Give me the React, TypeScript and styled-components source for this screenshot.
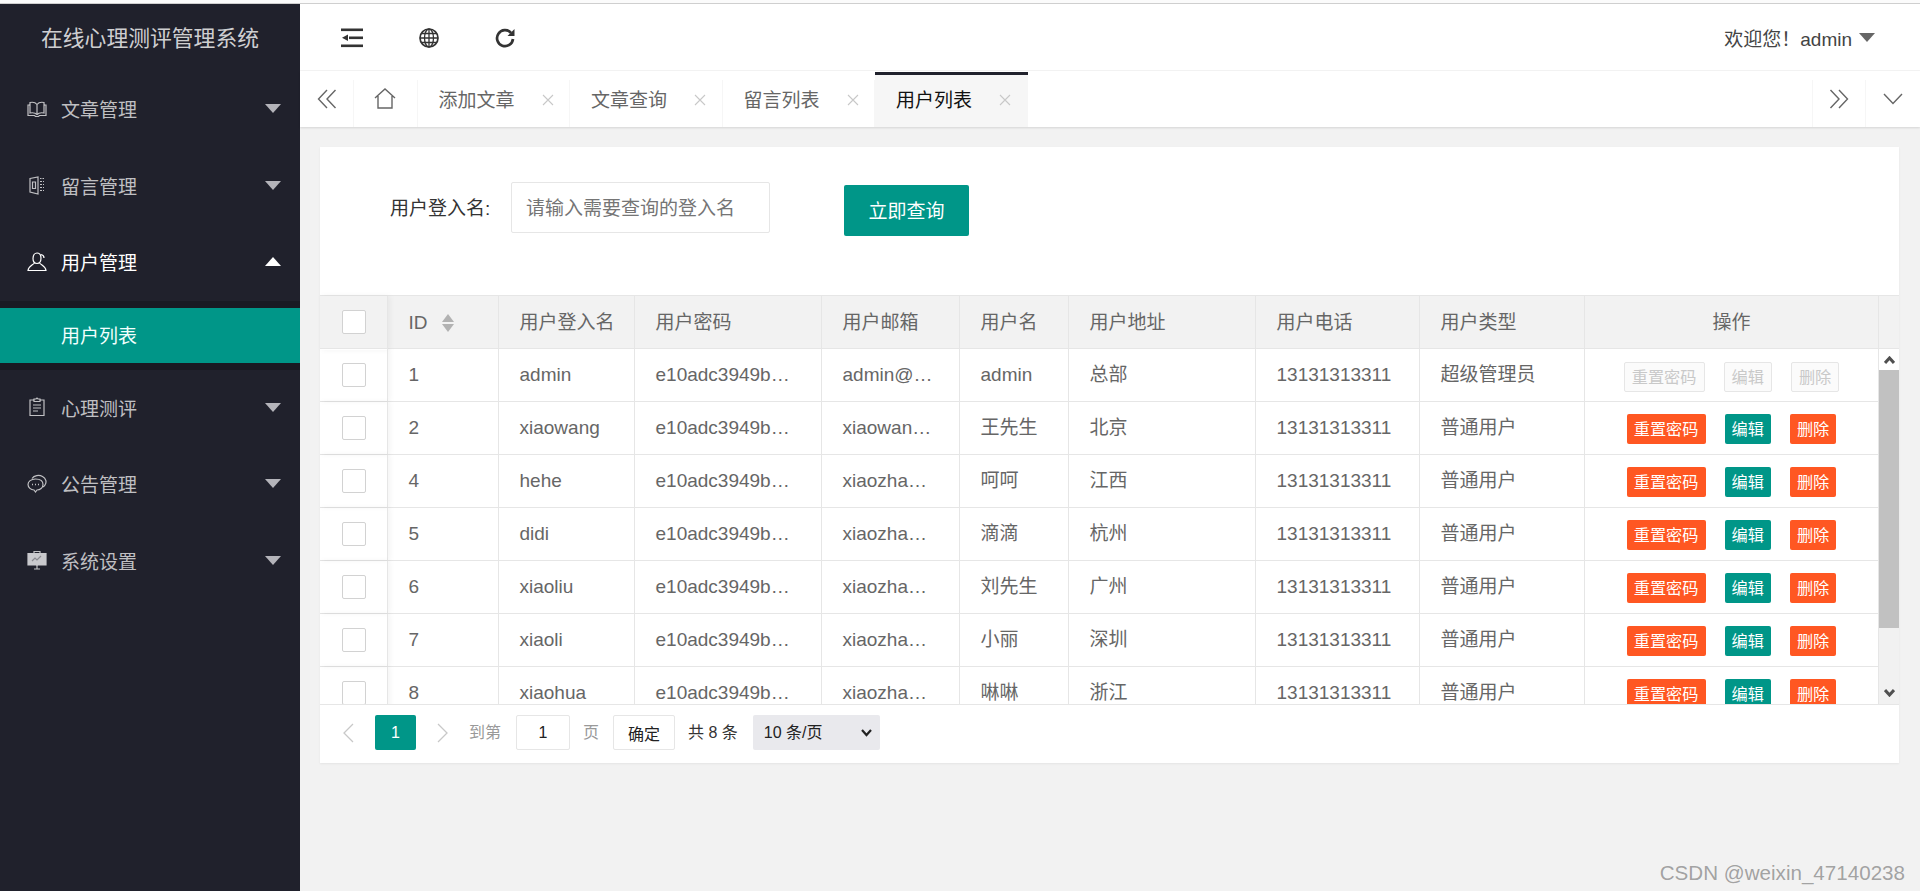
import React from "react";
import styled, { createGlobalStyle } from "styled-components";

const Global = createGlobalStyle`
  html, body { margin: 0; padding: 0; height: 100%; background: #f2f2f2; }
  #root { height: 100%; }
  * { box-sizing: border-box; }
  body { font-family: "Liberation Sans", "Noto Sans CJK SC", sans-serif; font-size: 19px; color: #666; }
`;

const Page = styled.div`
  position: relative;
  height: 891px;
  overflow: hidden;
  display: flex;
  flex-direction: column;
`;
const TopEdge = styled.div`
  height: 4px;
  flex: none;
  background: #fbfbfb;
  border-bottom: 1px solid #cfcfcf;
`;
const Body = styled.div`
  flex: 1;
  display: flex;
  min-height: 0;
`;

/* ---------- sidebar ---------- */
const Sidebar = styled.aside`
  width: 300px;
  flex: none;
  background: #20212c;
`;
const Brand = styled.div`
  height: 67px;
  padding-bottom: 2px;
  display: flex;
  align-items: center;
  justify-content: center;
  font-size: 21.8px;
  color: rgba(255, 255, 255, 0.8);
`;
const NavItem = styled.div<{ $open?: boolean }>`
  height: 76.5px;
  display: flex;
  align-items: center;
  padding: 0 19px 1.5px 27px;
  color: ${(p) => (p.$open ? "#fff" : "rgba(255,255,255,0.72)")};
`;
const NavIcon = styled.svg`
  width: 20px;
  height: 20px;
  flex: none;
  margin-right: 14px;
  fill: none;
  stroke: currentColor;
  stroke-width: 1.2;
`;
const Caret = styled.span<{ $up?: boolean }>`
  margin-left: auto;
  width: 0;
  height: 0;
  border-left: 8.5px solid transparent;
  border-right: 8.5px solid transparent;
  ${(p) =>
    p.$up
      ? "border-bottom: 9px solid #fff;"
      : "border-top: 9px solid #b4b4ba;"}
`;
const SubMenu = styled.div`
  background: #191a23;
  padding: 7px 0;
`;
const SubItem = styled.div`
  height: 55px;
  background: #009688;
  color: #f2fffd;
  padding: 0 0 1px 61px;
  display: flex;
  align-items: center;
`;

/* ---------- header ---------- */
const Main = styled.main`
  flex: 1;
  min-width: 0;
  display: flex;
  flex-direction: column;
`;
const Header = styled.header`
  height: 67px;
  flex: none;
  background: #fff;
  border-bottom: 1px solid #f4f4f4;
  display: flex;
  align-items: center;
  padding: 0 45px 0 14px;
`;
const HeaderSlot = styled.div`
  width: 76.5px;
  padding-top: 1px;
  display: flex;
  justify-content: center;
  color: #333;
`;
const UserBox = styled.div`
  margin-left: auto;
  display: flex;
  align-items: center;
  color: #444;
`;
const UserCaret = styled.span`
  margin-left: 7px;
  width: 0;
  height: 0;
  border-left: 8.5px solid transparent;
  border-right: 8.5px solid transparent;
  border-top: 9px solid #666;
`;

/* ---------- tabs ---------- */
const TabBar = styled.nav`
  height: 56px;
  flex: none;
  background: #fff;
  box-shadow: 0 1px 2px rgba(0, 0, 0, 0.12);
  display: flex;
  align-items: flex-end;
  position: relative;
`;
const TabTool = styled.div<{ $w: number; $left?: boolean }>`
  width: ${(p) => p.$w}px;
  height: 47px;
  flex: none;
  padding-bottom: 10px;
  display: flex;
  align-items: center;
  justify-content: center;
  color: #666;
  ${(p) => (p.$left ? "border-left: 1px solid #f6f6f6;" : "border-right: 1px solid #f6f6f6;")}
`;
const Tab = styled.div<{ $active?: boolean }>`
  width: 152.5px;
  flex: none;
  display: flex;
  align-items: center;
  padding-left: 21px;
  ${(p) =>
    p.$active
      ? `height: 55px; padding-bottom: 5px; background: #f6f6f6; border-top: 3px solid #20212c; color: #111; border-right: none;`
      : `height: 47px; padding-bottom: 10px; color: #666; border-right: 1px solid #f6f6f6;`}
`;
const TabClose = styled.svg`
  width: 12px;
  height: 12px;
  margin: 2px 0 0 27px;
  stroke: #c8c8c8;
  stroke-width: 1.1;
  fill: none;
`;
const TabFill = styled.div`
  flex: 1;
`;

/* ---------- content ---------- */
const Content = styled.div`
  flex: 1;
  padding: 20px 21px 0 20px;
`;
const Card = styled.section`
  height: 616px;
  background: #fff;
  box-shadow: 0 1px 2px rgba(0, 0, 0, 0.06);
  display: flex;
  flex-direction: column;
`;
const SearchRow = styled.div`
  height: 148px;
  flex: none;
  padding: 35px 0 0 70px;
  display: flex;
  align-items: flex-start;
`;
const SearchLabel = styled.label`
  width: 99px;
  margin-right: 22px;
  line-height: 53px;
  color: #333;
  white-space: nowrap;
`;
const SearchInput = styled.input`
  width: 259px;
  height: 51px;
  border: 1px solid #e6e6e6;
  border-radius: 2px;
  padding: 2px 14px 0;
  font: inherit;
  outline: none;
  &::placeholder { color: #757575; opacity: 1; }
`;
const PrimaryButton = styled.button`
  width: 125px;
  height: 51px;
  margin: 3px 0 0 74px;
  padding: 0 0 2px;
  border: none;
  border-radius: 2px;
  background: #009688;
  color: #fff;
  font: inherit;
`;

const columns = "68px 111px 136px 187px 138px 109px 187px 164px 165px 294px";
const TableWrap = styled.div`
  flex: 1;
  display: flex;
  flex-direction: column;
  min-height: 0;
`;
const HeadRow = styled.div`
  height: 54px;
  flex: none;
  display: grid;
  grid-template-columns: ${columns} 20px;
  background: #f2f2f2;
  border-top: 1px solid #e6e6e6;
  border-bottom: 1px solid #e6e6e6;
`;
const BodyArea = styled.div`
  height: 356px;
  flex: none;
  display: flex;
  border-bottom: 1px solid #e6e6e6;
`;
const RowsClip = styled.div`
  width: 1559px;
  flex: none;
  overflow: hidden;
`;
const Row = styled.div`
  height: 53px;
  display: grid;
  grid-template-columns: ${columns};
  border-bottom: 1px solid #e6e6e6;
`;
const Cell = styled.div`
  padding: 0 22.5px 0 20.5px;
  border-right: 1px solid #e6e6e6;
  line-height: 52px;
  white-space: nowrap;
  overflow: hidden;
  text-overflow: ellipsis;
  color: #666;
`;
const HeadCell = styled.div<{ $center?: boolean }>`
  padding: ${(p) => (p.$center ? "0" : "0 0 0 20.5px")};
  border-right: 1px solid #e6e6e6;
  line-height: 54px;
  white-space: nowrap;
  color: #666;
  text-align: ${(p) => (p.$center ? "center" : "left")};
`;
const SortCell = styled(HeadCell)`
  display: flex;
  align-items: center;
  gap: 14px;
`;
const SortIcon = styled.svg`
  width: 12px;
  height: 18px;
  fill: #b2b2b2;
`;
const CheckCell = styled.div`
  position: relative;
  border-right: 1px solid #e6e6e6;
  padding: 14px 0 0 22px;
  box-shadow: 2px 0 6px rgba(0, 0, 0, 0.05);
`;
const CheckBox = styled.span`
  display: block;
  width: 24px;
  height: 24px;
  background: #fff;
  border: 1px solid #d2d2d2;
  border-radius: 2px;
`;
const ActionCell = styled.div`
  border-right: 1px solid #e6e6e6;
  display: flex;
  justify-content: center;
  align-items: flex-start;
  gap: 19px;
  padding-top: 12px;
`;
const ActionButton = styled.span<{ $tone: "warm" | "teal" | "off" }>`
  height: 30px;
  padding: 0 7px;
  border-radius: 2px;
  font-size: 16.2px;
  line-height: 30px;
  white-space: nowrap;
  ${(p) =>
    p.$tone === "warm"
      ? "background:#FF5722;color:#fff;"
      : p.$tone === "teal"
      ? "background:#009688;color:#fff;"
      : "margin-top:1px;background:#fbfbfb;color:#c9c9c9;border:1px solid #e6e6e6;line-height:28px;"}
`;
const Track = styled.div`
  width: 20px;
  flex: none;
  background: #f1f1f1;
  display: flex;
  flex-direction: column;
`;
const TrackButton = styled.div<{ $top?: boolean }>`
  height: ${(p) => (p.$top ? "21px" : "23px")};
  flex: none;
  background: ${(p) => (p.$top ? "#fff" : "#f1f1f1")};
  display: flex;
  align-items: center;
  justify-content: center;
  margin-top: ${(p) => (p.$top ? "0" : "auto")};
`;
const TrackArrow = styled.svg`
  width: 11px;
  height: 8px;
  fill: none;
  stroke: #505050;
  stroke-width: 3;
`;
const Thumb = styled.div`
  height: 258px;
  flex: none;
  background: #c1c1c1;
`;

/* ---------- pager ---------- */
const Pager = styled.div`
  flex: 1;
  display: flex;
  align-items: flex-start;
  padding-top: 10px;
  font-size: 16px;
`;
const PagerArrow = styled.div<{ $w: number }>`
  width: ${(p) => p.$w}px;
  height: 35px;
  display: flex;
  align-items: center;
  justify-content: center;
`;
const PagerChevron = styled.svg`
  width: 12px;
  height: 20px;
  fill: none;
  stroke: #c8c8c8;
  stroke-width: 1.3;
`;
const PageNum = styled.div`
  width: 41px;
  height: 35px;
  background: #009688;
  border-radius: 2px;
  color: #fff;
  line-height: 35px;
  text-align: center;
`;
const PagerText = styled.span<{ $dark?: boolean; $ml?: number }>`
  line-height: 35px;
  white-space: nowrap;
  margin-left: ${(p) => p.$ml ?? 0}px;
  color: ${(p) => (p.$dark ? "#333" : "#999")};
`;
const PageInput = styled.input`
  width: 54px;
  height: 35px;
  margin-left: 15px;
  border: 1px solid #e6e6e6;
  border-radius: 2px;
  text-align: center;
  font: inherit;
  color: #222;
  padding: 0;
  outline: none;
`;
const ConfirmButton = styled.button`
  width: 62px;
  height: 35px;
  margin-left: 14px;
  border: 1px solid #e6e6e6;
  border-radius: 2px;
  background: #fff;
  font: inherit;
  color: #222;
  padding: 0;
`;
const SelectBox = styled.div`
  position: relative;
  width: 127px;
  height: 35px;
  margin-left: 15px;
`;
const PageSelect = styled.select`
  appearance: none;
  display: block;
  width: 100%;
  height: 100%;
  border: none;
  border-radius: 2px;
  background-color: #e9e9ed;
  font: inherit;
  color: #222;
  padding-left: 11px;
  outline: none;
`;
const SelectChevron = styled.svg`
  position: absolute;
  right: 8px;
  top: 14px;
  width: 11px;
  height: 8px;
  fill: none;
  stroke: #222;
  stroke-width: 2.2;
  pointer-events: none;
`;
const Watermark = styled.div`
  position: absolute;
  right: 15px;
  bottom: 6px;
  font-size: 20.6px;
  color: rgba(110, 110, 110, 0.62);
  white-space: nowrap;
`;

/* ---------- icons ---------- */
const BookIcon = () => (
  <NavIcon viewBox="0 0 20 20">
    <path d="M10 5.5C8.5 3.5 5.5 3 3 3.5v10.5c2.5-.5 5.5 0 7 1.5 1.5-1.5 4.5-2 7-1.5V3.5c-2.500-.5-5.500 0-7 2zM10 5.500v10" />
    <path d="M3 6H1v10.500h6.500l1 1h3l1-1H19V6h-2" />
  </NavIcon>
);
const LeafIcon = () => (
  <NavIcon viewBox="0 0 20 20">
    <path d="M3 3.500l8-1.500v17l-8-2zM5.500 7v6.500h3V7z" />
    <path d="M13 3.500h1.500M15.500 3.500h1.500M13 6.500h4M13 9.500h4M13 12.500h4M13 15.500h4" strokeDasharray="2 1" />
  </NavIcon>
);
const UserIcon = () => (
  <NavIcon viewBox="0 0 20 20">
    <path d="M6 6.500C6 3 8 1 10 1c2.500 0 4 2 4 5 0 3-1 5.500-4 5.500S6 9 6 6.500z" />
    <path d="M7.500 11C6 13 1.500 14 1 18.500h18C18.500 14 14 13 12.500 11" />
    <path d="M14 2.500c2 .5 3 2 3 3.500" />
  </NavIcon>
);
const ClipIcon = () => (
  <NavIcon viewBox="0 0 20 20">
    <path d="M7 3H3v15.500h14V3h-4" />
    <path d="M7 4.500V2h2l1-1 1 1h2v2.500zM6 8h8M6 11h8M6 14h5" />
  </NavIcon>
);
const ChatIcon = () => (
  <NavIcon viewBox="0 0 20 20">
    <path d="M8.500 5C4 5 1 7.500 1 10.500S4 16 7 16l1.500 2 1.500-2c3 0 6-2 6-5.500S13 5 8.500 5z" />
    <path d="M5 4.500C7 1.500 12 .5 15.500 2.500S20 8 18 11c-.5 1-1 1.500-2 2" />
    <path d="M5 10.500h1M8 10.500h1M11 10.500h1" strokeWidth="1.600" />
  </NavIcon>
);
const BoardIcon = () => (
  <NavIcon viewBox="0 0 20 20">
    <path d="M1 3.500h18v11.500H1z" fill="#c9c9cd" stroke="#c9c9cd" />
    <path d="M7 3V1.500h6V3M10 15v4M7 19h6" />
    <path d="M5 11l3-3 2 2 4-4" stroke="#8a8a90" />
  </NavIcon>
);
const HeaderIcon = styled.svg`
  width: 22px;
  height: 20px;
  display: block;
`;
const CloseGlyph = () => (
  <TabClose viewBox="0 0 12 12">
    <path d="M1 1l10 10M11 1L1 11" />
  </TabClose>
);
const ToolIcon = styled.svg<{ $w: number; $h: number }>`
  width: ${(p) => p.$w}px;
  height: ${(p) => p.$h}px;
  fill: none;
  stroke: currentColor;
  stroke-width: 1.4;
`;

const hash = "e10adc3949ba59abbe56e057f20f883e";
const users = [
  ["1", "admin", "admin@qq.com", "admin", "总部", "超级管理员"],
  ["2", "xiaowang", "xiaowang@qq.com", "王先生", "北京", "普通用户"],
  ["4", "hehe", "xiaozhang@qq.com", "呵呵", "江西", "普通用户"],
  ["5", "didi", "xiaozhang@qq.com", "滴滴", "杭州", "普通用户"],
  ["6", "xiaoliu", "xiaozhang@qq.com", "刘先生", "广州", "普通用户"],
  ["7", "xiaoli", "xiaozhang@qq.com", "小丽", "深圳", "普通用户"],
  ["8", "xiaohua", "xiaozhang@qq.com", "啉啉", "浙江", "普通用户"],
];

export default function App() {
  return (
    <Page>
      <Global />
      <TopEdge />
      <Body>
        <Sidebar>
          <Brand>在线心理测评管理系统</Brand>
          <NavItem><BookIcon />文章管理<Caret /></NavItem>
          <NavItem><LeafIcon />留言管理<Caret /></NavItem>
          <NavItem $open><UserIcon />用户管理<Caret $up /></NavItem>
          <SubMenu><SubItem>用户列表</SubItem></SubMenu>
          <NavItem><ClipIcon />心理测评<Caret /></NavItem>
          <NavItem><ChatIcon />公告管理<Caret /></NavItem>
          <NavItem><BoardIcon />系统设置<Caret /></NavItem>
        </Sidebar>
        <Main>
          <Header>
            <HeaderSlot>
              <HeaderIcon viewBox="0 0 22 20" fill="currentColor">
                <rect x="0" y="0.500" width="22" height="2.600" />
                <rect x="0" y="16.500" width="22" height="2.600" />
                <rect x="8" y="8.500" width="14" height="2.600" />
                <polygon points="1,9.800 7,6.500 7,13" />
              </HeaderIcon>
            </HeaderSlot>
            <HeaderSlot>
              <HeaderIcon viewBox="0 0 22 20" fill="none" stroke="currentColor" strokeWidth="1.300">
                <circle cx="11" cy="10" r="9" strokeWidth="1.700" />
                <ellipse cx="11" cy="10" rx="4.500" ry="9" />
                <path d="M11 1v18M2 10h18M3.200 5.500h15.600M3.200 14.500h15.600" />
              </HeaderIcon>
            </HeaderSlot>
            <HeaderSlot>
              <HeaderIcon viewBox="0 0 22 20" fill="none" stroke="currentColor" strokeWidth="2.700">
                <path d="M17 4.800A8 8 0 1 0 19 11" />
                <polygon points="13.500,8 20.500,8 20.500,1" fill="currentColor" stroke="none" />
              </HeaderIcon>
            </HeaderSlot>
            <UserBox>欢迎您！admin<UserCaret /></UserBox>
          </Header>
          <TabBar>
            <TabTool $w={54}>
              <ToolIcon $w={20} $h={20} viewBox="0 0 20 20" strokeWidth="1.900">
                <path d="M10 1L1.500 10 10 19M18.500 1L10 10l8.500 9" />
              </ToolIcon>
            </TabTool>
            <TabTool $w={63.5}>
              <ToolIcon $w={22} $h={22} viewBox="0 0 22 22" strokeWidth="1.100">
                <path d="M1 10L11 1l10 9M4 8v12h14V8" />
              </ToolIcon>
            </TabTool>
            <Tab>添加文章<CloseGlyph /></Tab>
            <Tab>文章查询<CloseGlyph /></Tab>
            <Tab>留言列表<CloseGlyph /></Tab>
            <Tab $active>用户列表<CloseGlyph /></Tab>
            <TabFill />
            <TabTool $w={53} $left>
              <ToolIcon $w={20} $h={20} viewBox="0 0 20 20" strokeWidth="1.500">
                <path d="M1.500 1L10 10 1.500 19M10 1l8.500 9L10 19" />
              </ToolIcon>
            </TabTool>
            <TabTool $w={55} $left>
              <ToolIcon $w={20} $h={12} viewBox="0 0 20 12" strokeWidth="1.200">
                <path d="M1 1l9 9.500L19 1" />
              </ToolIcon>
            </TabTool>
          </TabBar>
          <Content>
            <Card>
              <SearchRow>
                <SearchLabel>用户登入名:</SearchLabel>
                <SearchInput placeholder="请输入需要查询的登入名" />
                <PrimaryButton>立即查询</PrimaryButton>
              </SearchRow>
              <TableWrap>
                <HeadRow>
                  <CheckCell><CheckBox /></CheckCell>
                  <SortCell>
                    ID
                    <SortIcon viewBox="0 0 12 18">
                      <polygon points="6,0 12,8 0,8" />
                      <polygon points="0,10 12,10 6,18" />
                    </SortIcon>
                  </SortCell>
                  <HeadCell>用户登入名</HeadCell>
                  <HeadCell>用户密码</HeadCell>
                  <HeadCell>用户邮箱</HeadCell>
                  <HeadCell>用户名</HeadCell>
                  <HeadCell>用户地址</HeadCell>
                  <HeadCell>用户电话</HeadCell>
                  <HeadCell>用户类型</HeadCell>
                  <HeadCell $center>操作</HeadCell>
                  <div />
                </HeadRow>
                <BodyArea>
                  <RowsClip>
                    {users.map(([id, login, mail, name, addr, type]) => {
                      const isAdmin = id === "1";
                      return (
                        <Row key={id}>
                          <CheckCell><CheckBox /></CheckCell>
                          <Cell>{id}</Cell>
                          <Cell>{login}</Cell>
                          <Cell>{hash}</Cell>
                          <Cell>{mail}</Cell>
                          <Cell>{name}</Cell>
                          <Cell>{addr}</Cell>
                          <Cell>13131313311</Cell>
                          <Cell>{type}</Cell>
                          <ActionCell>
                            <ActionButton $tone={isAdmin ? "off" : "warm"}>重置密码</ActionButton>
                            <ActionButton $tone={isAdmin ? "off" : "teal"}>编辑</ActionButton>
                            <ActionButton $tone={isAdmin ? "off" : "warm"}>删除</ActionButton>
                          </ActionCell>
                        </Row>
                      );
                    })}
                  </RowsClip>
                  <Track>
                    <TrackButton $top>
                      <TrackArrow viewBox="0 0 11 8"><path d="M1 7l4.500-5L10 7" /></TrackArrow>
                    </TrackButton>
                    <Thumb />
                    <TrackButton>
                      <TrackArrow viewBox="0 0 11 8"><path d="M1 1l4.500 5L10 1" /></TrackArrow>
                    </TrackButton>
                  </Track>
                </BodyArea>
                <Pager>
                  <PagerArrow $w={55}>
                    <PagerChevron viewBox="0 0 12 20"><path d="M11 1L2 10l9 9" /></PagerChevron>
                  </PagerArrow>
                  <PageNum>1</PageNum>
                  <PagerArrow $w={53}>
                    <PagerChevron viewBox="0 0 12 20"><path d="M1 1l9 9-9 9" /></PagerChevron>
                  </PagerArrow>
                  <PagerText>到第</PagerText>
                  <PageInput defaultValue="1" />
                  <PagerText $ml={13}>页</PagerText>
                  <ConfirmButton>确定</ConfirmButton>
                  <PagerText $dark $ml={13}>共 8 条</PagerText>
                  <SelectBox>
                    <PageSelect defaultValue="10">
                      <option value="10">10 条/页</option>
                      <option value="20">20 条/页</option>
                      <option value="30">30 条/页</option>
                    </PageSelect>
                    <SelectChevron viewBox="0 0 11 8"><path d="M1 1l4.500 5L10 1" /></SelectChevron>
                  </SelectBox>
                </Pager>
              </TableWrap>
            </Card>
          </Content>
        </Main>
      </Body>
      <Watermark>CSDN @weixin_47140238</Watermark>
    </Page>
  );
}
